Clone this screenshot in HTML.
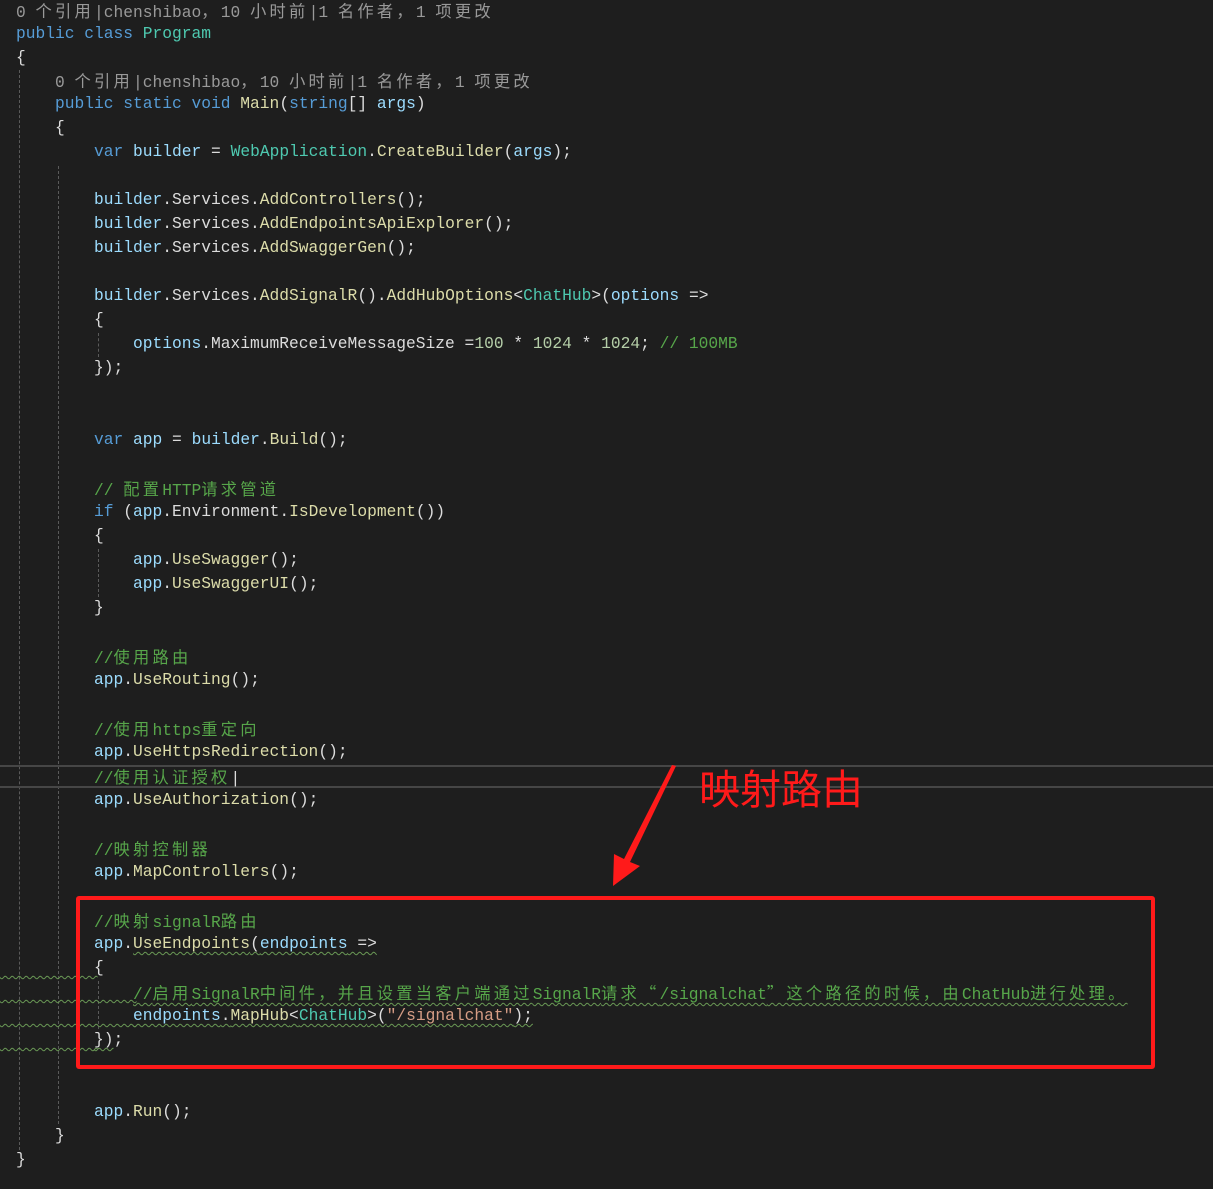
<!DOCTYPE html>
<html><head><meta charset="utf-8"><style>
html,body{margin:0;padding:0;background:#1e1e1e;width:1213px;height:1189px;overflow:hidden;position:relative}
.l{position:absolute;left:16px;height:24px;line-height:24px;white-space:pre;font-family:"Liberation Mono","Noto Sans CJK SC",monospace;font-size:16.25px;color:#dcdcdc}
i{font-style:normal;letter-spacing:3.25px;font-family:"Noto Sans CJK SC",sans-serif}
.k{color:#569cd6}.t{color:#4ec9b0}.m{color:#dcdcaa}.v{color:#9cdcfe}.c{color:#57a64a}.s{color:#d69d85}.n{color:#b5cea8}.g{color:#999}
.w{text-decoration:underline wavy #6a9955;text-decoration-thickness:1px;text-underline-offset:3px}
.sq{position:absolute;left:0;height:6px;background:repeating-linear-gradient(90deg,transparent 0 0px);border-bottom:0}
.gd{position:absolute;border-left:1px dashed #5a5a5a;width:0}
.hl{position:absolute;left:0;width:1213px;height:2px;background:#464646}
</style></head><body>
<div class="gd" style="left:19px;top:70px;height:1080px"></div>
<div class="gd" style="left:58px;top:166px;height:958px"></div>
<div class="gd" style="left:98px;top:333px;height:24px"></div>
<div class="gd" style="left:98px;top:549px;height:48px"></div>
<div class="gd" style="left:98px;top:981px;height:48px"></div>
<div class="hl" style="top:765px"></div>
<div class="hl" style="top:786px"></div>

<div class="l g" style="top:-2px">0 <i>个引用</i>|chenshibao<i>，</i>10 <i>小时前</i>|1 <i>名作者，</i>1 <i>项更改</i></div>
<div class="l" style="top:22px"><span class="k">public class</span> <span class="t">Program</span></div>
<div class="l" style="top:46px">{</div>
<div class="l g" style="top:68px;left:55px">0 <i>个引用</i>|chenshibao<i>，</i>10 <i>小时前</i>|1 <i>名作者，</i>1 <i>项更改</i></div>
<div class="l" style="top:92px;left:55px"><span class="k">public static void</span> <span class="m">Main</span>(<span class="k">string</span>[] <span class="v">args</span>)</div>
<div class="l" style="top:116px;left:55px">{</div>
<div class="l" style="top:140px;left:94px"><span class="k">var</span> <span class="v">builder</span> = <span class="t">WebApplication</span>.<span class="m">CreateBuilder</span>(<span class="v">args</span>);</div>
<div class="l" style="top:188px;left:94px"><span class="v">builder</span>.Services.<span class="m">AddControllers</span>();</div>
<div class="l" style="top:212px;left:94px"><span class="v">builder</span>.Services.<span class="m">AddEndpointsApiExplorer</span>();</div>
<div class="l" style="top:236px;left:94px"><span class="v">builder</span>.Services.<span class="m">AddSwaggerGen</span>();</div>
<div class="l" style="top:284px;left:94px"><span class="v">builder</span>.Services.<span class="m">AddSignalR</span>().<span class="m">AddHubOptions</span>&lt;<span class="t">ChatHub</span>&gt;(<span class="v">options</span> =&gt;</div>
<div class="l" style="top:308px;left:94px">{</div>
<div class="l" style="top:332px;left:133px"><span class="v">options</span>.MaximumReceiveMessageSize =<span class="n">100</span> * <span class="n">1024</span> * <span class="n">1024</span>; <span class="c">// 100MB</span></div>
<div class="l" style="top:356px;left:94px">});</div>
<div class="l" style="top:428px;left:94px"><span class="k">var</span> <span class="v">app</span> = <span class="v">builder</span>.<span class="m">Build</span>();</div>
<div class="l c" style="top:476px;left:94px">// <i>配置</i>HTTP<i>请求管道</i></div>
<div class="l" style="top:500px;left:94px"><span class="k">if</span> (<span class="v">app</span>.Environment.<span class="m">IsDevelopment</span>())</div>
<div class="l" style="top:524px;left:94px">{</div>
<div class="l" style="top:548px;left:133px"><span class="v">app</span>.<span class="m">UseSwagger</span>();</div>
<div class="l" style="top:572px;left:133px"><span class="v">app</span>.<span class="m">UseSwaggerUI</span>();</div>
<div class="l" style="top:596px;left:94px">}</div>
<div class="l c" style="top:644px;left:94px">//<i>使用路由</i></div>
<div class="l" style="top:668px;left:94px"><span class="v">app</span>.<span class="m">UseRouting</span>();</div>
<div class="l c" style="top:716px;left:94px">//<i>使用</i>https<i>重定向</i></div>
<div class="l" style="top:740px;left:94px"><span class="v">app</span>.<span class="m">UseHttpsRedirection</span>();</div>
<div class="l c" style="top:764px;left:94px">//<i>使用认证授权</i><span style="color:#ddd">|</span></div>
<div class="l" style="top:788px;left:94px"><span class="v">app</span>.<span class="m">UseAuthorization</span>();</div>
<div class="l c" style="top:836px;left:94px">//<i>映射控制器</i></div>
<div class="l" style="top:860px;left:94px"><span class="v">app</span>.<span class="m">MapControllers</span>();</div>
<div class="l c" style="top:908px;left:94px">//<i>映射</i>signalR<i>路由</i></div>
<div class="l" style="top:932px;left:94px"><span class="v">app</span>.<span class="w"><span class="m">UseEndpoints</span>(<span class="v">endpoints</span> =&gt;</span></div>
<div class="l w" style="top:956px;left:0px;width:96px">          </div>
<div class="l" style="top:956px;left:94px">{</div>
<div class="l w" style="top:980px;left:0px;width:134px">              </div>
<div class="l c" style="top:980px;left:133px"><span class="w">//<i>启用</i>SignalR<i>中间件，并且设置当客户端通过</i>SignalR<i>请求“</i>/signalchat<i>”这个路径的时候，由</i>ChatHub<i>进行处理。</i></span></div>
<div class="l w" style="top:1004px;left:0px;width:134px">              </div>
<div class="l" style="top:1004px;left:133px"><span class="w"><span class="v">endpoints</span>.<span class="m">MapHub</span>&lt;<span class="t">ChatHub</span>&gt;(<span class="s">"/signalchat"</span>);</span></div>
<div class="l w" style="top:1028px;left:0px;width:96px">          </div>
<div class="l" style="top:1028px;left:94px"><span class="w">})</span>;</div>
<div class="l" style="top:1100px;left:94px"><span class="v">app</span>.<span class="m">Run</span>();</div>
<div class="l" style="top:1124px;left:55px">}</div>
<div class="l" style="top:1148px">}</div>

<div style="position:absolute;left:76px;top:896px;width:1071px;height:165px;border:4px solid #ff1a1a;border-radius:3px"></div>
<div style="position:absolute;left:699px;top:760px;font-family:'Noto Sans CJK SC',sans-serif;font-size:41px;line-height:52px;color:#ff1a1a">映射路由</div>
<svg style="position:absolute;left:0;top:0" width="1213" height="1189">
<polygon points="676,766 630,862 640,866 613,886 614,854 624,859 672,765" fill="#ff1a1a"/>
</svg>
</body></html>
